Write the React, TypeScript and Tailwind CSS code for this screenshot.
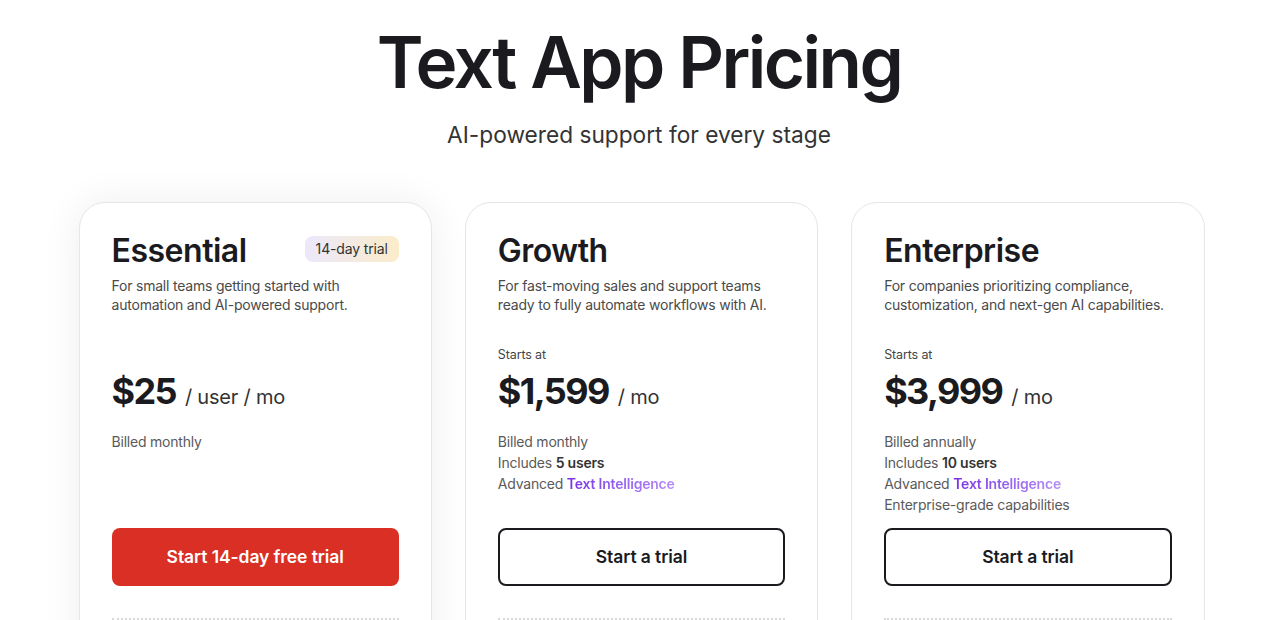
import React from "react";

type Plan = {
  name: string;
  badge?: string;
  description: string[];
  startsAt?: boolean;
  price: string;
  unit: string;
  details: React.ReactNode[];
  cta: string;
  primary?: boolean;
};

function Intel() {
  return (
    <span className="font-semibold bg-gradient-to-r from-[#7a2ee6] to-[#b58cf5] bg-clip-text text-transparent">
      Text Intelligence
    </span>
  );
}

const plans: Plan[] = [
  {
    name: "Essential",
    badge: "14-day trial",
    description: ["For small teams getting started with", "automation and AI-powered support."],
    price: "$25",
    unit: "/ user / mo",
    details: ["Billed monthly"],
    cta: "Start 14-day free trial",
    primary: true,
  },
  {
    name: "Growth",
    description: ["For fast-moving sales and support teams", "ready to fully automate workflows with AI."],
    startsAt: true,
    price: "$1,599",
    unit: "/ mo",
    details: [
      "Billed monthly",
      <>
        Includes <strong className="font-semibold text-[#333]">5 users</strong>
      </>,
      <>
        Advanced <Intel />
      </>,
    ],
    cta: "Start a trial",
  },
  {
    name: "Enterprise",
    description: ["For companies prioritizing compliance,", "customization, and next-gen AI capabilities."],
    startsAt: true,
    price: "$3,999",
    unit: "/ mo",
    details: [
      "Billed annually",
      <>
        Includes <strong className="font-semibold text-[#333]">10 users</strong>
      </>,
      <>
        Advanced <Intel />
      </>,
      "Enterprise-grade capabilities",
    ],
    cta: "Start a trial",
  },
];

function PlanCard({ plan }: { plan: Plan }) {
  return (
    <div
      className={
        "flex flex-col rounded-[26px] border border-[#e6e6e6] bg-white px-8 pt-[28px] pb-10 " +
        (plan.primary ? "shadow-[0_0_40px_rgba(0,0,0,0.07)]" : "")
      }
    >
      {/* header */}
      <div className="flex h-[40px] items-start justify-between">
        <h2 className="text-[32px] font-semibold leading-[40px] tracking-[-0.015em] text-[#1b1b1f]">{plan.name}</h2>
        {plan.badge && (
          <span className="mt-[5px] rounded-lg bg-gradient-to-r from-[#ece8fb] to-[#fbecc9] px-[11px] py-[3px] text-[14px] leading-[20px] tracking-[-0.01em] text-[#333]">
            {plan.badge}
          </span>
        )}
      </div>
      <p className="mt-[5px] whitespace-nowrap text-[14px] leading-[19px] tracking-[-0.015em] text-[#4a4a4a]">
        {plan.description[0]}
        <br />
        {plan.description[1]}
      </p>

      {/* price */}
      <div className="mt-[33px] h-[16px] text-[12.5px] leading-[16px] tracking-[-0.01em] text-[#444]">
        {plan.startsAt ? "Starts at" : ""}
      </div>
      <div className="mt-[6px] flex h-[44px] items-baseline gap-[9px]">
        <span className="text-[36px] font-bold leading-[44px] tracking-[-0.045em] text-[#1b1b1f]">{plan.price}</span>
        <span className="text-[20px] leading-[44px] tracking-[-0.01em] text-[#333]">{plan.unit}</span>
      </div>

      <ul className="mt-[18px] h-[97px] text-[14px] leading-[21px] tracking-[-0.015em] text-[#5a5a5a]">
        {plan.details.map((d, i) => (
          <li key={i}>{d}</li>
        ))}
      </ul>

      <button
        className={
          "h-[58px] w-full rounded-lg text-[17.5px] font-semibold tracking-[-0.005em] " +
          (plan.primary
            ? "bg-[#d92f24] text-white"
            : "border-2 border-[#1b1b1f] bg-white text-[#1b1b1f]")
        }
      >
        {plan.cta}
      </button>

      <div className="mt-[32px] border-t-2 border-dotted border-[#d9d9d9]" />
      <div className="h-[80px]" />
    </div>
  );
}

export default function App() {
  return (
    <div
      className="min-h-screen bg-white pt-[26px]"
      style={{ fontFamily: "Inter, 'Noto Sans', sans-serif" }}
    >
      <h1 className="text-center text-[71px] font-semibold leading-[72px] tracking-[-0.036em] text-[#1b1b1f]">
        Text App Pricing
      </h1>
      <p className="mt-[22px] text-center text-[22.7px] leading-[30px] text-[#333]">
        AI-powered support for every stage
      </p>
      <div className="mt-[52px] pl-[5px]">
        <div className="mx-auto grid w-[1126px] grid-cols-3 gap-[33px]">
          {plans.map((p) => (
            <PlanCard key={p.name} plan={p} />
          ))}
        </div>
      </div>
    </div>
  );
}
